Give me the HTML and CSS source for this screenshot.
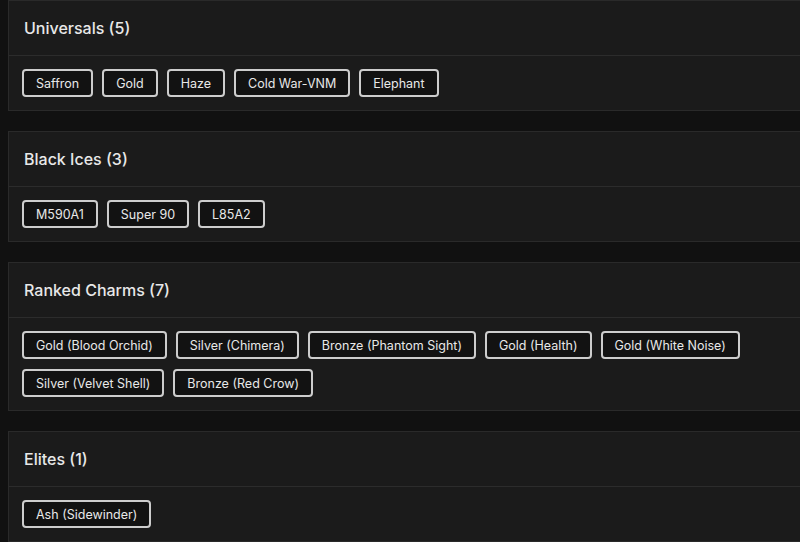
FILE: index.html
```html
<!DOCTYPE html>
<html lang="en">
<head>
<meta charset="utf-8">
<title>Collection</title>
<link rel="stylesheet" href="styles.css">
</head>
<body>
<main class="list">
  <section class="card">
    <header class="card-head"><h2 class="card-title">Universals (5)</h2></header>
    <div class="card-body">
      <span class="tag">Saffron</span>
      <span class="tag">Gold</span>
      <span class="tag">Haze</span>
      <span class="tag">Cold War-VNM</span>
      <span class="tag">Elephant</span>
    </div>
  </section>
  <section class="card">
    <header class="card-head"><h2 class="card-title">Black Ices (3)</h2></header>
    <div class="card-body">
      <span class="tag">M590A1</span>
      <span class="tag">Super 90</span>
      <span class="tag">L85A2</span>
    </div>
  </section>
  <section class="card">
    <header class="card-head"><h2 class="card-title">Ranked Charms (7)</h2></header>
    <div class="card-body">
      <span class="tag">Gold (Blood Orchid)</span>
      <span class="tag">Silver (Chimera)</span>
      <span class="tag">Bronze (Phantom Sight)</span>
      <span class="tag">Gold (Health)</span>
      <span class="tag">Gold (White Noise)</span>
      <span class="tag">Silver (Velvet Shell)</span>
      <span class="tag">Bronze (Red Crow)</span>
    </div>
  </section>
  <section class="card">
    <header class="card-head"><h2 class="card-title">Elites (1)</h2></header>
    <div class="card-body">
      <span class="tag">Ash (Sidewinder)</span>
    </div>
  </section>
</main>
</body>
</html>
```

FILE: styles.css
```css
html, body {
  margin: 0;
  padding: 0;
  background: #111111;
  overflow: hidden;
}

body {
  font-family: Inter, "Noto Sans", sans-serif;
  color: #e6e6e6;
}

.list {
  display: flex;
  flex-direction: column;
  gap: 20px;
  padding-left: 8px;
  width: 820px;
}

.card {
  background: #1b1b1b;
  border: 1px solid #2a2a2a;
}

.card-head {
  height: 54px;
  display: flex;
  align-items: center;
  padding: 0 15px 1px;
  box-sizing: border-box;
  height: 55px;
  border-bottom: 1px solid #2c2c2c;
}

.card-title {
  margin: 0;
  font-size: 16px;
  font-weight: 500;
  color: #e8e8e8;
}

.card-body {
  display: flex;
  flex-wrap: wrap;
  gap: 10px 9px;
  padding: 13px;
}

.tag {
  box-sizing: border-box;
  height: 28px;
  display: inline-flex;
  align-items: center;
  padding: 0 12px;
  border: 2px solid #cdcdcd;
  border-radius: 4px;
  background: #121212;
  font-size: 12.5px;
  color: #e8e8e8;
}
```
